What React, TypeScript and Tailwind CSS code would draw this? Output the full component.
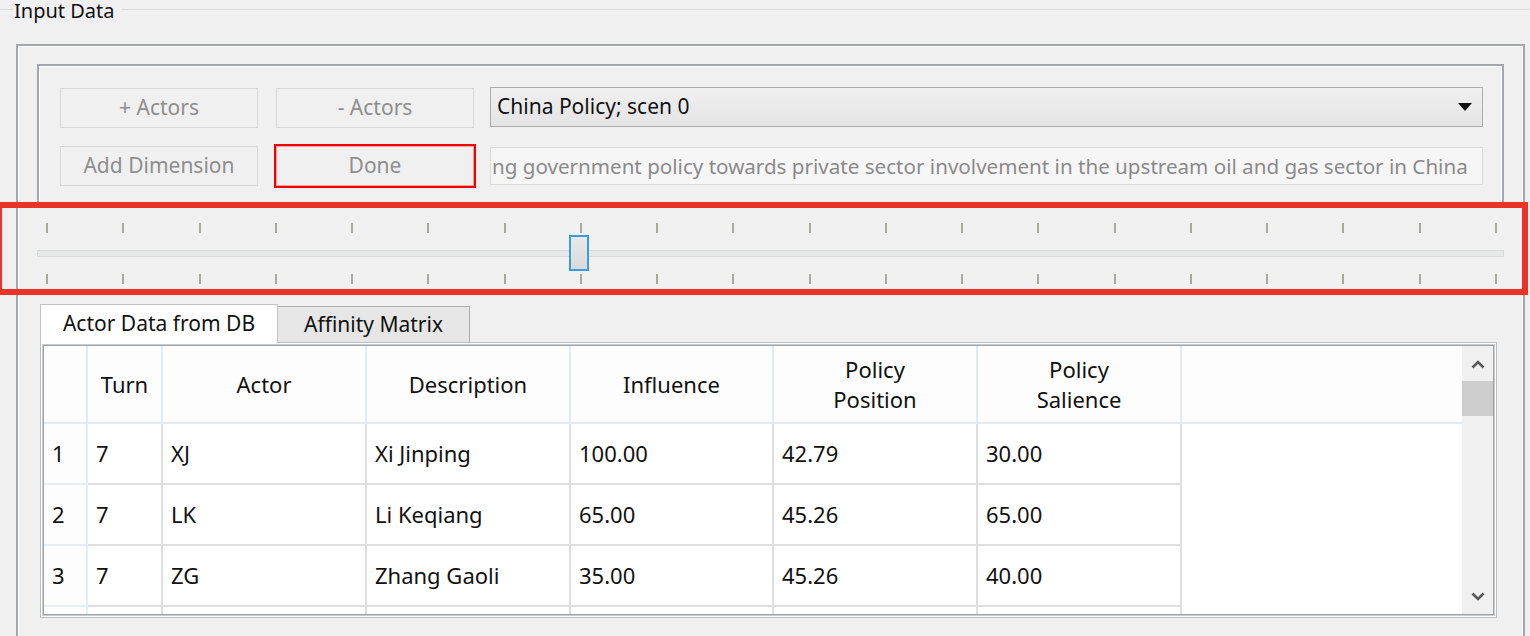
import React from "react";

const frame =
  "border-2 border-[#a4a7ab] shadow-[inset_1px_1px_0_#ffffff,inset_-1px_-1px_0_#ffffff]";

const rows = [
  ["1", "7", "XJ", "Xi Jinping", "100.00", "42.79", "30.00"],
  ["2", "7", "LK", "Li Keqiang", "65.00", "45.26", "65.00"],
  ["3", "7", "ZG", "Zhang Gaoli", "35.00", "45.26", "40.00"],
  ["", "", "", "", "", "", ""],
];

const headers = ["Turn", "Actor", "Description", "Influence", "Policy\nPosition", "Policy\nSalience"];

function DisabledButton({ label, done }: { label: string; done?: boolean }) {
  return (
    <button
      className={
        "flex h-[40px] w-[198px] items-center justify-center border bg-[#f0f0f0] text-[21px] text-[#8e8e8e] " +
        (done ? "border-[#ff9c9c] ring-2 ring-[#f20000]" : "border-[#d6d6d6]")
      }
    >
      {label}
    </button>
  );
}

function Ticks() {
  return (
    <div className="flex justify-between pl-[9px] pr-[7px]">
      {Array.from({ length: 20 }).map((_, i) => (
        <div key={i} className="h-[10px] w-[2px] bg-[#a9a9a1]" />
      ))}
    </div>
  );
}

function Slider() {
  return (
    <div className="relative h-[96px] pt-[15px]">
      <Ticks />
      <div className="mt-[17px] h-[7px] border border-[#d7d9d9] bg-[#e7e8e8]" />
      <div className="mt-[17px]">
        <Ticks />
      </div>
      <div className="absolute left-[532px] top-[27px] h-[36px] w-[20px] border-2 border-[#3a9de0] bg-gradient-to-b from-[#e9e9e9] to-[#d9d9d9]" />
    </div>
  );
}

function Chevron({ up }: { up?: boolean }) {
  return (
    <svg width="14" height="9" viewBox="0 0 14 9">
      <polyline
        points={up ? "1.5,7.5 7,2 12.5,7.5" : "1.5,1.5 7,7 12.5,1.5"}
        fill="none"
        stroke="#5a5a5a"
        strokeWidth="2.6"
      />
    </svg>
  );
}

function Table() {
  return (
    <div className="flex h-[270px] overflow-hidden border border-[#9ea2a6] bg-white shadow-[0_0_0_1px_#c9cccf]">
      <div className="min-w-0 flex-1 overflow-hidden">
        <div className="grid grid-cols-[44px_75px_204px_204px_203px_204px_204px_1fr] text-[22px] text-[#111]">
          <div className="h-[78px] border-b-2 border-r-2 border-[#e2eaf5] bg-[#fdfdfd]" />
          {headers.map((h) => (
            <div
              key={h}
              className="flex h-[78px] items-center justify-center whitespace-pre-line border-b-2 border-r-2 border-[#e2eaf5] bg-[#fdfdfd] text-center leading-[30px]"
            >
              {h}
            </div>
          ))}
          <div className="h-[78px] border-b-2 border-[#e2eaf5] bg-[#fdfdfd]" />
          {rows.map((r, ri) => (
            <React.Fragment key={ri}>
              <div className="flex h-[61px] items-center border-b-2 border-r-2 border-[#e6edf6] bg-[#fdfdfd] pl-[8px]">
                {r[0]}
              </div>
              {r.slice(1).map((c, ci) => (
                <div
                  key={ci}
                  className="flex h-[61px] items-center border-b-2 border-r-2 border-[#dedede] pl-[8px]"
                >
                  {c}
                </div>
              ))}
              <div className="h-[61px]" />
            </React.Fragment>
          ))}
        </div>
      </div>
      <div className="flex w-[31px] flex-col items-center bg-[#f0f0f0]">
        <div className="flex h-[35px] items-center justify-center pt-[2px]">
          <Chevron up />
        </div>
        <div className="h-[35px] w-full bg-[#cdcdcd]" />
        <div className="flex-1" />
        <div className="flex h-[35px] items-center justify-center">
          <Chevron />
        </div>
      </div>
    </div>
  );
}

export default function App() {
  return (
    <div className="relative h-[636px] w-[1530px] overflow-hidden bg-[#f0f0f0] font-['Noto_Sans',sans-serif]">
      {/* group box title */}
      <div className="flex h-[22px] items-start">
        <div className="mt-[9px] h-px w-[13px] bg-[#dadada]" />
        <div className="mt-[1px] px-[1px] text-[20px] leading-[20px] text-[#111]">Input Data</div>
        <div className="ml-[6px] mt-[9px] h-px flex-1 bg-[#dadada]" />
      </div>

      <div className="ml-[16px] mr-[5px] mt-[22px]">
        <div className={"h-[640px] pl-[19px] pr-[19px] pt-[18px] " + frame}>
          {/* controls box */}
          <div className={"pb-[20px] pl-[21px] pr-[19px] pt-[22px] " + frame}>
            <div className="flex">
              <div className="mr-[18px] flex flex-col gap-[18px]">
                <DisabledButton label="+ Actors" />
                <DisabledButton label="Add Dimension" />
              </div>
              <div className="mr-[16px] flex flex-col gap-[18px]">
                <DisabledButton label="- Actors" />
                <DisabledButton label="Done" done />
              </div>
              <div className="flex min-w-0 flex-1 flex-col">
                <div className="-mt-[1px] flex h-[40px] items-center justify-between border border-[#acacac] bg-gradient-to-b from-[#f0f0f0] to-[#e4e4e4] pl-[6px] pr-[10px] text-[21px] text-[#111]">
                  <span>China Policy; scen 0</span>
                  <svg width="14" height="8" viewBox="0 0 14 8">
                    <polygon points="0,0 14,0 7,8" fill="#111" />
                  </svg>
                </div>
                <div className="mt-[20px] flex h-[38px] items-center overflow-hidden whitespace-nowrap border border-[#dadada] bg-[#f6f6f6] pl-[1px] text-[20.6px] text-[#8a8a8a]">
                  <span className="shrink-0">ng government policy towards private sector involvement in the upstream oil and gas sector in China</span>
                </div>
              </div>
            </div>
          </div>

          <Slider />

          {/* tab widget */}
          <div className="ml-[3px] mr-[7px]">
            <div className="flex items-end">
              <div className="relative z-10 -mb-px flex h-[39px] w-[238px] items-center justify-center border border-b-0 border-[#c3c3c3] bg-white text-[21px] text-[#111]">
                Actor Data from DB
              </div>
              <div className="flex h-[36px] w-[192px] items-center justify-center border border-b-0 border-l-0 border-[#adadad] bg-[#e6e6e6] text-[21px] text-[#111]">
                Affinity Matrix
              </div>
            </div>
            <div className="border border-[#bdbdbd] bg-white p-[2px]">
              <Table />
            </div>
          </div>
        </div>
      </div>

      {/* red annotation rectangle */}
      <div className="absolute left-[-4px] top-[202px] h-[93px] w-[1532px] border-[6px] border-[#ea3327]" />
    </div>
  );
}
